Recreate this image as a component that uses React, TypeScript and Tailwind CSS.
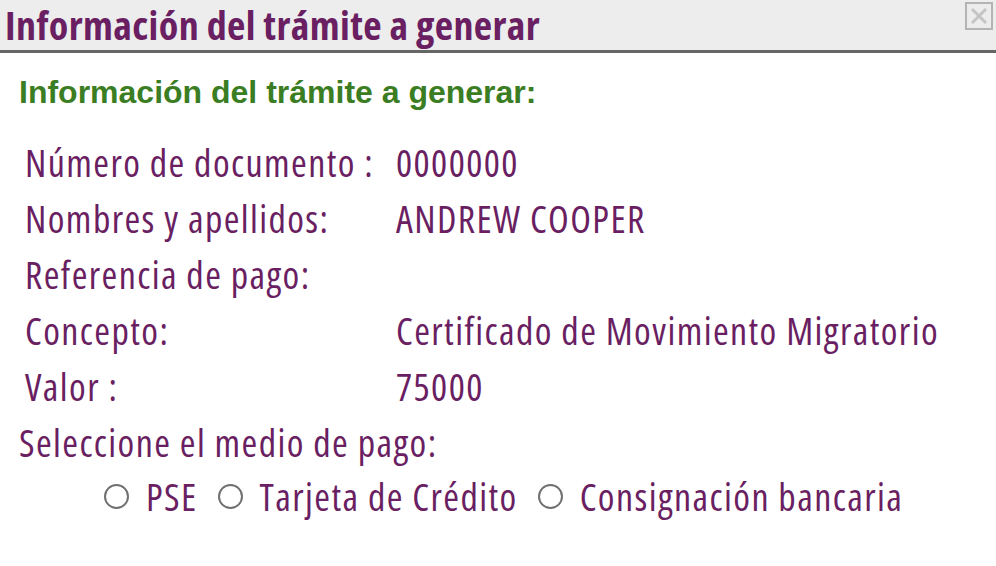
import React, { useState } from "react";

const rows = [
  { label: "Número de documento :", value: "0000000" },
  { label: "Nombres y apellidos:", value: "ANDREW COOPER" },
  { label: "Referencia de pago:", value: "" },
  { label: "Concepto:", value: "Certificado de Movimiento Migratorio" },
  { label: "Valor :", value: "75000" },
];

const medios = ["PSE", "Tarjeta de Crédito", "Consignación bancaria"];

const App = () => {
  const [medio, setMedio] = useState("");

  return (
    <div className="w-[996px] h-[566px] bg-white font-['Open_Sans',sans-serif] text-[#6a1f62] overflow-hidden">
      <div className="flex items-start justify-between h-[53px] bg-[#ededed] border-b-[3px] border-[#666666]">
        <h1 className="pl-[5px] -mt-[3px] text-[40px] leading-[55px] font-bold font-stretch-condensed tracking-[0.4px] whitespace-nowrap">
          Información del trámite a generar
        </h1>
        <button className="mt-[2px] mr-[3px] w-[28px] h-[28px] border-2 border-[#b4b4b4] bg-[#ececec] flex items-center justify-center">
          <svg width="20" height="20" viewBox="0 0 20 20">
            <path d="M3 3 L17 17 M17 3 L3 17" stroke="#c4c4c4" strokeWidth="3" />
          </svg>
        </button>
      </div>

      <h2 className="mt-[21px] pl-[19px] font-['Liberation_Sans',Arial,sans-serif] font-bold text-[32px] leading-[36px] text-[#3a7d22]">
        Información del trámite a generar:
      </h2>

      <div className="mt-[24px] pl-[25px] grid grid-cols-[371px_1fr] text-[38px] tracking-[1.4px] font-stretch-condensed">
        {rows.map((r) => (
          <React.Fragment key={r.label}>
            <div className="h-[56px] leading-[56px] whitespace-nowrap">{r.label}</div>
            <div className="h-[56px] leading-[56px] whitespace-nowrap">{r.value}</div>
          </React.Fragment>
        ))}
      </div>

      <div className="pl-[19px] h-[56px] leading-[56px] text-[38px] tracking-[1.4px] font-stretch-condensed">
        Seleccione el medio de pago:
      </div>

      <div className="flex items-center pl-[104px] h-[52px] text-[38px] tracking-[1.4px] font-stretch-condensed">
        {medios.map((m) => (
          <label key={m} className="flex items-center mr-[20px] cursor-pointer whitespace-nowrap">
            <span
              onClick={() => setMedio(m)}
              className="w-[25px] h-[25px] rounded-full border-[2px] border-[#707070] bg-white mr-[17px] flex items-center justify-center"
            >
              {medio === m && <span className="w-[11px] h-[11px] rounded-full bg-[#333]" />}
            </span>
            <span onClick={() => setMedio(m)}>{m}</span>
          </label>
        ))}
      </div>
    </div>
  );
};

export default App;
